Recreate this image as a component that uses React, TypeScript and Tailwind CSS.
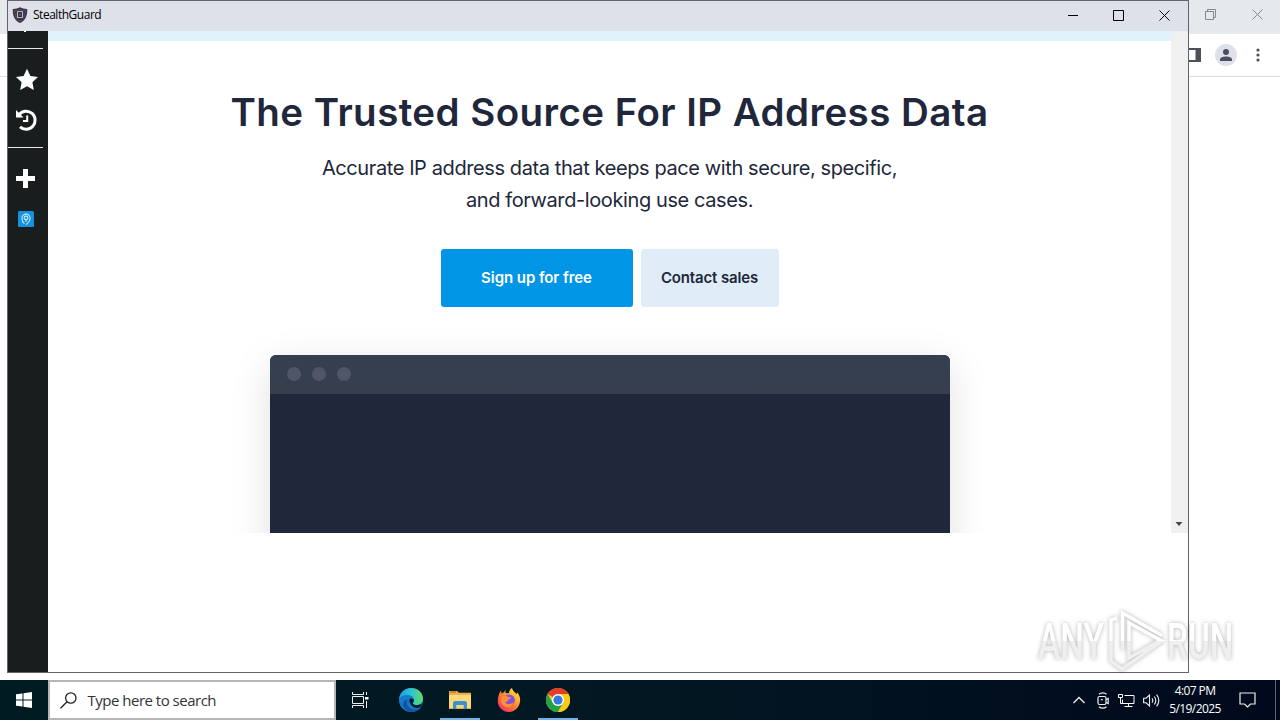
import type { ReactNode } from "react";

/* ================= BROWSER BEHIND ================= */

function BackgroundBrowser() {
  return (
    <div className="h-[680px] w-full bg-white">
      <div className="flex h-[34px] items-start justify-end bg-[#e6e9ec]">
        <div className="flex h-7 items-center gap-9 pr-[17px]">
          <svg width="11" height="11" viewBox="0 0 11 11" fill="none" stroke="#85888b">
            <path d="M.5 2.5h8v8h-8zM2.5 2.5v-2h8v8h-2" />
          </svg>
          <svg width="11" height="11" viewBox="0 0 11 11" fill="none" stroke="#85888b">
            <path d="M.5.5l10 10M10.5.5l-10 10" />
          </svg>
        </div>
      </div>
      <div className="flex h-[43px] items-center justify-end border-b border-[#dadce0] pr-5">
        <svg width="16" height="14" viewBox="0 0 16 14" fill="none" stroke="#4d4f59" strokeWidth="2">
          <path d="M1 1h14v12H1z" />
          <path d="M12.5 1v12" strokeWidth="4" />
        </svg>
        <div className="ml-3.5 flex h-[22px] w-[22px] items-center justify-center rounded-full bg-[#dfe1e8]">
          <svg width="12" height="12" viewBox="0 0 12 12" fill="#4b4e60">
            <circle cx="6" cy="3" r="3" />
            <path d="M0 12V10.3C0 8.2 4 7.4 6 7.4s6 .8 6 2.9V12z" />
          </svg>
        </div>
        <svg className="ml-[19px]" width="4" height="14" viewBox="0 0 4 14" fill="#4c4e58">
          <circle cx="2" cy="2" r="1.6" />
          <circle cx="2" cy="7" r="1.6" />
          <circle cx="2" cy="12" r="1.6" />
        </svg>
      </div>
    </div>
  );
}

/* ================= APP WINDOW ================= */

function TitleBar() {
  return (
    <div className="flex h-[30px] shrink-0 items-center bg-[#dee1e9] pb-0.5">
      <svg className="ml-[4px]" width="16" height="16" viewBox="0 0 16 16">
        <path d="M8 .3C5.5 1.7 3 2 .8 1.9.5 8.5 2.5 13.5 8 15.9c5.5-2.4 7.5-7.4 7.2-14C13 2 10.5 1.7 8 .3z" fill="#37333f" />
        <path d="M8 2.2C6 3.2 4.2 3.5 2.5 3.5 2.6 8.5 4 12 8 14" fill="none" stroke="#80503f" strokeWidth=".9" />
        <path d="M8 2.2c2 1 3.8 1.3 5.5 1.3C13.4 8.5 12 12 8 14" fill="none" stroke="#4f5278" strokeWidth=".9" />
        <rect x="5.5" y="4.5" width="5" height="6" rx=".5" fill="#27293d" stroke="#bab8cc" strokeWidth="1.2" />
        <path d="M8 6.3v2.5" stroke="#8587a2" />
      </svg>
      <span className="ml-[5px] font-['Open_Sans','Noto_Sans',sans-serif] text-[12px] leading-4 tracking-[-0.48px] whitespace-nowrap text-black">
        StealthGuard
      </span>
      <div className="ml-auto flex items-center gap-[35px] pr-[18px]">
        <svg width="11" height="11" viewBox="0 0 11 11" stroke="#000">
          <path d="M1 5.5h10" />
        </svg>
        <svg width="11" height="11" viewBox="0 0 11 11" fill="none" stroke="#000">
          <path d="M.5.5h10v10H.5z" />
        </svg>
        <svg width="11" height="11" viewBox="0 0 11 11" fill="none" stroke="#000">
          <path d="M.5.5l10 10M10.5.5l-10 10" />
        </svg>
      </div>
    </div>
  );
}

function Sidebar() {
  return (
    <div className="flex w-10 shrink-0 flex-col bg-[#191d1d]">
      <div className="h-[17px]">
        <div className="ml-4 h-px w-0.5 bg-white" />
      </div>
      <div className="h-px w-[35px] bg-[#e6e6e6]" />
      <svg className="mt-[19px] ml-[7px]" width="24" height="24" viewBox="0 0 24 24" fill="#fff">
        <path d="M12 .8l3.4 7.1 7.6 1-5.6 5.4 1.4 7.7L12 18.3 5.2 22l1.4-7.7L1 8.9l7.600-1z" />
      </svg>
      <svg className="mt-[16px] ml-[7px]" width="24" height="24" viewBox="0 0 24 24" fill="none" stroke="#fff">
        <path d="M4.3 6.3A9 9 0 1 1 5 18.8" strokeWidth="3" />
        <path d="M1 2v7.5h7.5z" fill="#fff" stroke="none" />
        <path d="M12.2 7.5v5.6H8" strokeWidth="2" />
      </svg>
      <div className="mt-[15px] h-px w-[35px] bg-[#e6e6e6]" />
      <svg className="mt-[21px] ml-2" width="19" height="19" viewBox="0 0 19 19" stroke="#fff" strokeWidth="5">
        <path d="M9.5 0v19M0 9.5h19" />
      </svg>
      <svg className="mt-[23px] ml-[10px]" width="16" height="16" viewBox="0 0 16 16" fill="none">
        <rect width="16" height="16" rx="1.5" fill="#1592df" />
        <path d="M6.4 12.6C4.8 11.3 3.9 9.3 3.9 7.2a4.1 4.1 0 0 1 8.2 0c0 2.1-1 4-2.8 5.4L8 13.5" stroke="#c5eaff" strokeWidth="1.1" />
        <circle cx="8" cy="7" r="1.9" stroke="#c5eaff" strokeWidth="1.1" />
        <path d="M8 7.5v3.5" stroke="#c5eaff" />
      </svg>
    </div>
  );
}

function Terminal() {
  return (
    <div className="mt-12 h-[400px] w-[680px] shrink-0 overflow-hidden rounded-md bg-[#21273a] shadow-[0_10px_40px_rgba(0,0,0,0.12)]">
      <div className="flex h-[39px] items-center gap-[11px] bg-linear-to-b from-[#334050] to-[#393d4e] pb-px pl-[17px]">
        {[0, 1, 2].map((i) => (
          <div key={i} className="h-3.5 w-3.5 rounded-full bg-[#505665]" />
        ))}
      </div>
    </div>
  );
}

function HeroPage() {
  return (
    <div className="flex h-[502px] w-[1123px] flex-col items-center overflow-hidden bg-white font-['Inter','Liberation_Sans',sans-serif] text-[#21273a]">
      <div className="h-2.5 w-full shrink-0 bg-[#dff3fc]" />
      <h1 className="mt-[45px] text-[38.5px] leading-[52px] font-semibold tracking-[0.44px] whitespace-nowrap">
        The Trusted Source For IP Address Data
      </h1>
      <p className="mt-[14px] text-center text-[20px] leading-8 tracking-[-0.4px] whitespace-nowrap">
        Accurate IP address data that keeps pace with secure, specific,
        <br />
        and forward-looking use cases.
      </p>
      <div className="mt-[33px] flex gap-2 text-[15px] font-semibold">
        <button className="h-[58px] w-48 rounded-[3px] bg-[#0095e5] tracking-[-0.07px] text-white">
          Sign up for free
        </button>
        <button className="h-[58px] w-[138px] rounded-[3px] bg-[#e0edf8] tracking-[-0.14px]">
          Contact sales
        </button>
      </div>
      <Terminal />
    </div>
  );
}

function AppWindow() {
  return (
    <div className="absolute top-0 left-[7px] flex h-[673px] w-[1182px] flex-col border border-[#63646a] bg-white">
      <TitleBar />
      <div className="flex flex-1">
        <Sidebar />
        <HeroPage />
        <div className="flex h-[502px] w-[17px] items-end bg-[#f0f0f0] pb-1.5 pl-1">
          <svg width="8" height="5" viewBox="0 0 8 5" fill="#484848">
            <path d="M.5 0h7L4 4z" />
          </svg>
        </div>
      </div>
    </div>
  );
}

/* ================= WATERMARK ================= */

function Watermark() {
  return (
    <svg
      className="absolute top-[604px] left-[1030px] overflow-visible font-['Roboto','Liberation_Sans',sans-serif] drop-shadow-[0_0_2px_rgba(0,0,0,0.3)]"
      width="212"
      height="72"
      viewBox="0 0 212 72"
    >
      <defs>
        <linearGradient id="mark" x1="0" y1="0" x2="0" y2="72" gradientUnits="userSpaceOnUse">
          <stop offset=".51" stopColor="#fff" />
          <stop offset=".51" stopColor="#efefef" />
        </linearGradient>
        {/* same split, measured from the text baseline */}
        <linearGradient id="markText" x1="0" y1="-36" x2="0" y2="0" gradientUnits="userSpaceOnUse">
          <stop offset=".5" stopColor="#fff" />
          <stop offset=".5" stopColor="#efefef" />
        </linearGradient>
      </defs>
      <g fill="url(#markText)" fontSize="50" fontWeight="500">
        <text transform="translate(8 55) scale(.67 1)">ANY</text>
        <text transform="translate(137 55) scale(.665 1)">RUN</text>
      </g>
      <g fill="none" stroke="url(#mark)" strokeWidth="3.5">
        <path d="M92.5 46V9L132 31.5" />
        <path d="M87 14l-6 2v41l11 8 40-28-33-18v35l30-17" />
      </g>
    </svg>
  );
}

/* ================= TASKBAR ================= */

function TaskButton({ open, children }: { open?: boolean; children: ReactNode }) {
  return (
    <div className="flex w-[49px] justify-center">
      <div
        className={
          open
            ? "flex w-10 items-center justify-center border-b-2 border-[#76b0e5] pt-0.5"
            : "flex w-10 items-center justify-center"
        }
      >
        {children}
      </div>
    </div>
  );
}

function EdgeIcon() {
  return (
    <svg width="24" height="24" viewBox="0 0 24 24">
      <defs>
        <linearGradient id="edgeTop" x1="0" x2="1">
          <stop offset="0" stopColor="#1b9de0" />
          <stop offset=".5" stopColor="#2cc4d0" />
          <stop offset="1" stopColor="#62db65" />
        </linearGradient>
      </defs>
      <circle cx="12" cy="12" r="12" fill="#137bce" />
      <path d="M0 11.5C.5 5 5.5 0 12 0c7 0 12 5 12 10.5 0 4-3 6.5-6.5 6.5-2.5 0-4.2-.8-3.5-2 .7-.9 1-1.6 1-2.7C15 8.8 11.5 7 8 7c-4 0-7 2-8 4.500z" fill="url(#edgeTop)" />
      <path d="M8.5 11.5C6.5 16 10 21.5 16 21.5c2.5 0 4.6-.8 6-2C20 22.3 16.5 24 12.5 24 7.5 24 4 20 4 16.5c0-3 2-5 4.5-5z" fill="#15549f" />
      <path d="M11 10.7c2-.8 3.900.1 3.9 2 0 1.3-1.4 1.9-1 3 .7 1.7 5.1 2.3 9.1-.2-.5 2-2 4.2-4.5 4.5-5.4.6-9.800-6.8-7.5-9.3z" fill="#031c25" />
    </svg>
  );
}

function FolderIcon() {
  return (
    <svg width="22" height="20" viewBox="0 0 22 20">
      <path d="M0 2.5V1h8l2 1.8h12V19H0z" fill="#eab14b" />
      <path d="M0 5h22v13H0z" fill="#ffd978" />
      <path d="M1 2h6" stroke="#c27925" strokeWidth="1.5" />
      <path d="M4 19v-6.5L5.5 11h11l1.5 1.5V19h-3.500v-4h-7v4z" fill="#3793d4" />
      <path d="M7.5 15h7v3h-7z" fill="#f2d37e" />
    </svg>
  );
}

function FirefoxIcon() {
  return (
    <svg width="24" height="24" viewBox="0 0 24 24">
      <defs>
        <linearGradient id="fox" x1="1" y1="0" x2=".2" y2="1">
          <stop offset="0" stopColor="#fff044" />
          <stop offset=".35" stopColor="#ffb52e" />
          <stop offset=".65" stopColor="#ff703b" />
          <stop offset="1" stopColor="#f52c6b" />
        </linearGradient>
      </defs>
      <path d="M4 2.5l.5 3L7 4.2 8.5 2v3l3.5.3c0-2.5 1.5-4.5 3-5.3.6 3 3 4 4.5 6l.7-1.5C22.5 7 23.5 10 23 13.5 22.2 19.5 17.5 24 12 24 5.5 24 .8 19 .8 13 .8 9 2 5.5 4 2.5z" fill="url(#fox)" />
      <circle cx="12" cy="12.2" r="5.8" fill="#8051df" />
      <path d="M5.5 8.2c2-.9 4.2-.6 5.5.8l3 .5c0 1.5-2.5 1.5-3 2.5-.3 1.5-1.8 1.6-2.8 2.3 2 2.8 6 2.2 8-.3-.5 4-3.2 5.5-5.7 5.3C6.5 19 4 15.5 4 12c0-1.500.5-3 1.5-3.8z" fill="#ff9034" />
    </svg>
  );
}

function ChromeIcon() {
  return (
    <svg width="24" height="24" viewBox="0 0 24 24">
      <circle cx="12" cy="12" r="12" fill="#fbc916" />
      <path d="M12 12L1.6 6A12 12 0 0 1 22.4 6H12z" fill="#e33b2e" />
      <path d="M1.6 6A12 12 0 0 0 12 24l5.2-9L12 12 6.8 15z" fill="#25a14a" />
      <path d="M12 6h10.4A12 12 0 0 1 12 24l5.2-9z" fill="#fbc916" />
      <circle cx="12" cy="12" r="6" fill="#fff" />
      <circle cx="12" cy="12" r="4.6" fill="#3479e2" />
    </svg>
  );
}

function Tray() {
  return (
    <div className="ml-auto flex h-full items-center text-white">
      <svg width="12" height="8" viewBox="0 0 12 8" fill="none" stroke="#eee" strokeWidth="1.3">
        <path d="M.5 7L6 1.5 11.5 7" />
      </svg>
      <svg className="ml-[12px]" width="12" height="17" viewBox="0 0 12 17" fill="none" stroke="#eee" strokeWidth="1.2">
        <path d="M2 2.3C4 .4 7.5.4 9.5 2.3M2 14.7c2 1.9 5.5 1.9 7.5 0" />
        <rect x="1" y="4.5" width="8" height="8" rx="1.5" />
        <path d="M9 7.5l2.2-1v5L9 10.500" />
        <path d="M3.8 7.7h2" />
      </svg>
      <svg className="ml-[9px]" width="17" height="15" viewBox="0 0 17 15" fill="none" stroke="#fff">
        <path d="M6.5 2.5h9.5v8H4.5v-4M10.5 10.5v3M6.5 13.5h8" />
        <path d="M.5 1.5h4v3h-4zM2.5 4.5v6h2" />
      </svg>
      <svg className="ml-[8px]" width="17" height="15" viewBox="0 0 17 15" fill="none" stroke="#eee" strokeWidth="1.1">
        <path d="M.6 5.2h2.5L6.5 2v11L3.1 9.8H.6z" />
        <path d="M9 5.3q1.6 2.2 0 4.4M11.3 3.5q3 4 0 8M13.6 1.7q4.5 5.8 0 11.6" />
      </svg>
      <div className="ml-[8px] w-[54px] text-center font-['Open_Sans','Noto_Sans',sans-serif] text-[12px] leading-[18px] tracking-[-0.6px] whitespace-nowrap">
        <div>4:07 PM</div>
        <div>5/19/2025</div>
      </div>
      <svg className="ml-[17px]" width="17" height="16" viewBox="0 0 17 16" fill="none" stroke="#eee" strokeWidth="1.2">
        <path d="M1 1h15v11h-4.500l-3 3-3-3H1z" />
      </svg>
      <div className="ml-[19px] h-full w-[5px] border-l border-[#5a626c]" />
    </div>
  );
}

function Taskbar() {
  return (
    <div className="flex h-10 items-stretch bg-linear-to-r from-[#001b22] via-[#021722] to-[#01091d]">
      <div className="flex w-12 items-center justify-center">
        <svg width="16" height="16" viewBox="0 0 16 16" fill="#fff">
          <path d="M0 2.3L6.5 1.4v6.1H0zM7.5 1.2L16 0v7.5H7.5zM0 8.5h6.5v6.1L0 13.7zM7.5 8.5H16V16l-8.500-1.200z" />
        </svg>
      </div>
      <div className="flex w-[288px] items-center border-2 border-[#b4b6b8] bg-white">
        <svg className="ml-[10px]" width="17" height="17" viewBox="0 0 17 17" fill="none" stroke="#222" strokeWidth="1.3">
          <circle cx="10.8" cy="6" r="5.2" />
          <path d="M7.1 9.7L.5 16.3" />
        </svg>
        <span className="ml-[10.5px] font-['Open_Sans','Noto_Sans',sans-serif] text-[15px] tracking-[-0.5px] whitespace-nowrap text-[#333]">
          Type here to search
        </span>
      </div>
      <TaskButton>
        <svg width="17" height="16" viewBox="0 0 17 16" fill="none" stroke="#f0f0f0">
          <path d="M.5 0v2.5h11V0M.5 16v-2.5h11V16M.5 4.5h11v7H.5zM14.5 0v3M14.5 9v7" />
          <path d="M13 5h3.5v2.5H13z" fill="#fff" stroke="none" />
        </svg>
      </TaskButton>
      <div className="ml-px flex">
        <TaskButton><EdgeIcon /></TaskButton>
        <TaskButton open><FolderIcon /></TaskButton>
        <TaskButton><FirefoxIcon /></TaskButton>
        <TaskButton open><ChromeIcon /></TaskButton>
      </div>
      <Tray />
    </div>
  );
}

export default function App() {
  return (
    <div className="relative h-[720px] w-[1280px] overflow-hidden">
      <BackgroundBrowser />
      <Taskbar />
      <AppWindow />
      <Watermark />
    </div>
  );
}
